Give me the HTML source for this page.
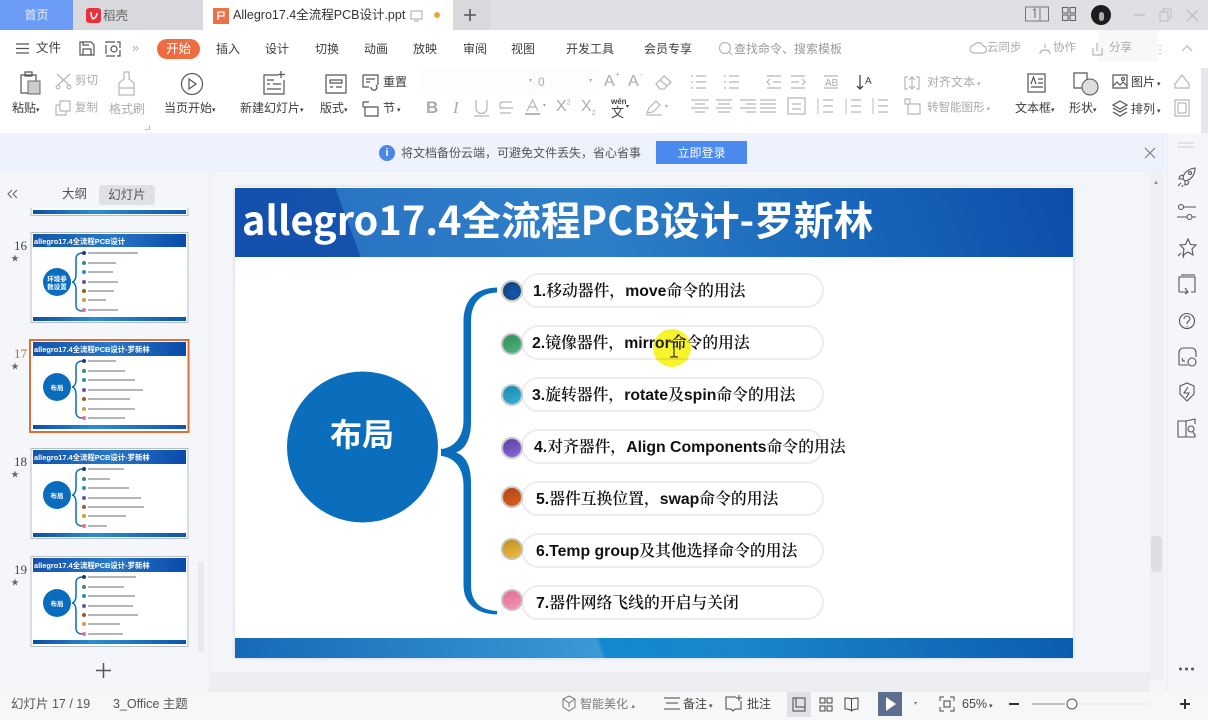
<!DOCTYPE html>
<html lang="zh">
<head>
<meta charset="utf-8">
<title>Allegro17.4全流程PCB设计.ppt</title>
<style>
html,body{margin:0;padding:0;width:1208px;height:720px;overflow:hidden;background:#f3f5f9}
body{position:relative;font-family:"Liberation Sans","Noto Sans CJK SC",sans-serif;color:#3d3d3d;font-size:13px;line-height:1.2}
.a{position:absolute;white-space:nowrap}
.g{color:#a9abae}
.pill{position:absolute;left:521px;width:299px;height:31px;background:#fff;border:2px solid #ececef;border-radius:18px;box-sizing:content-box}
.dot{position:absolute;left:501px;width:22px;height:22px;border-radius:50%;box-shadow:0 0 0 1px #c8c8c4 inset}
.dot i{position:absolute;left:2px;top:2px;width:18px;height:18px;border-radius:50%}
.it{position:absolute;white-space:nowrap;font-family:"Liberation Sans","Noto Serif CJK SC",serif;font-size:15.8px;font-weight:600;color:#111;line-height:22px;letter-spacing:0}
.it b{font-family:"Liberation Sans",sans-serif;font-weight:700}
svg{position:absolute;overflow:visible}
.s{fill:none;stroke:#555;stroke-width:1.2}
.l{fill:none;stroke:#b4b6b9;stroke-width:1.2}
</style>
</head>
<body>
<!-- tab bar -->
<div class="a" style="left:0;top:0;width:1208px;height:30px;background:#dfe0e3"></div>
<div class="a" style="left:0;top:0;width:73px;height:30px;background:#6c9cf6;color:#e8f0ff;text-align:center;line-height:31px;font-size:12px">首页</div>
<div class="a" style="left:73px;top:0;width:130px;height:30px;background:#d8d9dc"></div>
<div class="a" style="left:86px;top:8px;width:15px;height:15px;background:#e8303f;border-radius:3px"></div>
<svg style="left:86px;top:8px" width="15" height="15"><path d="M5 4c0 4 1 6 2 7 2-1 4-3 4-6" fill="none" stroke="#fff" stroke-width="1.500"/></svg>
<div class="a" style="left:103px;top:9px;font-size:12.500px;color:#666">稻壳</div>
<div class="a" style="left:203px;top:0;width:250px;height:30px;background:#fff"></div>
<div class="a" style="left:213px;top:8px;width:16px;height:16px;background:#ee7048"></div>
<svg style="left:213px;top:8px" width="16" height="16"><path d="M5 12V4h6v4H5" fill="none" stroke="#fff" stroke-width="1.300"/></svg>
<div class="a" style="left:233px;top:8px;font-size:12.500px;color:#333">Allegro17.4全流程PCB设计.ppt</div>
<svg style="left:410px;top:10px" width="14" height="12"><rect x="1" y="1" width="11" height="8" class="l"/><path d="M4 11h5" class="l"/></svg>
<div class="a" style="left:434px;top:12px;width:6px;height:6px;border-radius:50%;background:#e8a93a"></div>
<div class="a" style="left:453px;top:0;width:37px;height:30px;background:#d8d9dc"></div>
<svg style="left:463px;top:8px" width="14" height="14"><path d="M7 1v12M1 7h12" stroke="#555" stroke-width="1.600" fill="none"/></svg>
<svg style="left:1025px;top:6px" width="24" height="16"><rect x=".5" y="1" width="23" height="14" fill="none" stroke="#777"/><path d="M15 1v14" stroke="#777"/><path d="M8 4l2-1v9" fill="none" stroke="#666"/></svg>
<svg style="left:1062px;top:7px" width="14" height="14"><g fill="none" stroke="#666" stroke-width="1.100"><rect x=".5" y=".5" width="5.500" height="5.500"/><rect x="8" y=".5" width="5.500" height="5.500"/><rect x=".5" y="8" width="5.500" height="5.500"/><rect x="8" y="8" width="5.500" height="5.500"/></g></svg>
<div class="a" style="left:1091px;top:5px;width:20px;height:20px;border-radius:50%;background:#1d1d1f"></div>
<div class="a" style="left:1099px;top:12px;width:5px;height:9px;background:#aaa;border-radius:3px"></div>
<svg style="left:1133px;top:8px" width="70" height="14"><path d="M1 7h11" stroke="#bbb" stroke-width="1.200"/><path d="M27 4h8v9h-8zM30 4V1h8v9h-3" fill="none" stroke="#bbb"/><path d="M54 2l11 11M65 2L54 13" stroke="#bbb" stroke-width="1.200"/></svg>

<!-- menu row + ribbon -->
<div class="a" style="left:0;top:30px;width:1208px;height:103px;background:#fff"></div>
<svg style="left:16px;top:43px" width="14" height="11"><path d="M0 1h13M0 5.500h13M0 10h13" stroke="#555" stroke-width="1.200"/></svg>
<div class="a" style="left:36px;top:41px;font-size:12.500px">文件</div>
<svg style="left:79px;top:41px" width="16" height="15"><path d="M1 1h11l3 3v10H1zM4 14V8h8v6M4 1v3h6" class="s"/></svg>
<svg style="left:105px;top:41px" width="16" height="16"><rect x="1" y="1" width="14" height="14" class="s" stroke-dasharray="9 2"/><circle cx="9" cy="8" r="3" class="s"/></svg>
<div class="a" style="left:132px;top:40px;font-size:13px;color:#aaa">»</div>
<div class="a" style="left:157px;top:39px;width:43px;height:20px;border-radius:10px;background:#ef6c42;color:#fff;text-align:center;line-height:20px;font-size:12.500px">开始</div>
<div class="a" style="left:216px;top:42px;font-size:12px">插入</div>
<div class="a" style="left:265px;top:42px;font-size:12px">设计</div>
<div class="a" style="left:315px;top:42px;font-size:12px">切换</div>
<div class="a" style="left:364px;top:42px;font-size:12px">动画</div>
<div class="a" style="left:413px;top:42px;font-size:12px">放映</div>
<div class="a" style="left:463px;top:42px;font-size:12px">审阅</div>
<div class="a" style="left:511px;top:42px;font-size:12px">视图</div>
<div class="a" style="left:566px;top:42px;font-size:12px">开发工具</div>
<div class="a" style="left:644px;top:42px;font-size:12px">会员专享</div>
<svg style="left:718px;top:41px" width="16" height="16"><circle cx="7" cy="7" r="5.500" class="l"/><path d="M11 11l3 3" class="l"/></svg>
<div class="a g" style="left:734px;top:42px;font-size:12px;color:#999">查找命令、搜索模板</div>
<div class="a" style="left:1098px;top:30px;width:60px;height:32px;background:#f4f4f4;opacity:.6"></div>
<div class="a g" style="left:987px;top:42px;font-size:11.500px">云同步</div>
<div class="a g" style="left:1053px;top:42px;font-size:11.500px">协作</div>
<div class="a g" style="left:1109px;top:42px;font-size:11.500px">分享</div>
<svg style="left:960px;top:42px" width="230" height="14"><path d="M14 11a4 4 0 010-8 5 5 0 019 1 3 3 0 010 7z" class="l"/><path d="M80 12c0-3 2-4 5-4s5 1 5 4M85 2v4" class="l"/><path d="M133 6v7h9V6M137 1v8" class="l"/><path d="M200 3v1M200 7v1M200 11v1" stroke="#888"/><path d="M222 9l5-5 5 5" class="l"/></svg>

<!-- ribbon icons -->
<svg style="left:18px;top:71px" width="24" height="24"><path d="M3 4h15v18H3zM7 1h7v4H7z" class="s"/><rect x="10" y="10" width="12" height="13" fill="#ccc" stroke="#666"/></svg>
<div class="a" style="left:12px;top:101px;font-size:12px">粘贴<span style="font-size:7px">▾</span></div>
<svg style="left:55px;top:73px" width="18" height="16"><path d="M2 1l12 11M15 1L3 12" class="l"/><circle cx="3" cy="14" r="1.800" class="l"/><circle cx="14" cy="14" r="1.800" class="l"/></svg>
<div class="a g" style="left:75px;top:75px;font-size:11.500px">剪切</div>
<svg style="left:55px;top:100px" width="16" height="16"><path d="M5 1h10v10H5zM1 5h4M1 5v10h10v-4" class="l"/></svg>
<div class="a g" style="left:75px;top:102px;font-size:11.500px">复制</div>
<svg style="left:117px;top:71px" width="20" height="25"><path d="M7 1h5v7l5 4v12H2V12l5-4z" class="l"/><path d="M2 17h15" class="l"/></svg>
<div class="a g" style="left:109px;top:102px;font-size:12px">格式刷</div>
<svg style="left:180px;top:72px" width="24" height="24"><circle cx="12" cy="12" r="10.500" class="s"/><path d="M9 7l7 5-7 5z" class="s"/></svg>
<div class="a" style="left:164px;top:101px;font-size:12px">当页开始<span style="font-size:7px">▾</span></div>
<svg style="left:262px;top:71px" width="25" height="25"><path d="M16 4H2v19h20V9M5 9h7M5 13h3M5 18h14M11 13h8M19 0v7M16 3.500h7" class="s"/></svg>
<div class="a" style="left:240px;top:101px;font-size:12px">新建幻灯片<span style="font-size:7px">▾</span></div>
<svg style="left:325px;top:74px" width="22" height="20"><path d="M1 1h20v18H1zM5 6h12v3H5zM5 13h3M11 13h6" class="s"/></svg>
<div class="a" style="left:320px;top:101px;font-size:12px">版式<span style="font-size:7px">▾</span></div>
<svg style="left:362px;top:74px" width="17" height="16"><path d="M1 1h15v10M1 1v12h6M4 5h9M4 8h4" class="s"/><path d="M9 13a3 3 0 105-2" class="s"/></svg>
<div class="a" style="left:383px;top:75px;font-size:12px">重置</div>
<svg style="left:362px;top:100px" width="17" height="17"><path d="M1 2v5M1 7h15v9H3V7M1 2h6" class="s"/></svg>
<div class="a" style="left:383px;top:101px;font-size:12px">节<span style="font-size:7px"> ▾</span></div>
<div class="a" style="left:145px;top:125px;width:4px;height:4px;border-right:1px solid #bbb;border-bottom:1px solid #bbb"></div>

<!-- font controls -->
<div class="a" style="left:421px;top:71px;width:114px;height:22px;background:#fdfdfd;box-shadow:0 0 2px #eee"></div>
<div class="a" style="left:535px;top:71px;width:63px;height:22px;background:#fdfdfd;box-shadow:0 0 2px #eee"></div>
<div class="a g" style="left:529px;top:78px;font-size:6px">▾</div>
<div class="a g" style="left:538px;top:75px;font-size:12px">0</div>
<div class="a g" style="left:589px;top:78px;font-size:6px">▾</div>
<div class="a g" style="left:604px;top:72px;font-size:16px">A</div>
<div class="a g" style="left:615px;top:70px;font-size:8px">+</div>
<div class="a g" style="left:628px;top:72px;font-size:16px">A</div>
<div class="a g" style="left:640px;top:70px;font-size:8px">-</div>
<svg style="left:655px;top:74px" width="18" height="16"><path d="M1 10l8-8 7 6-7 7H5zM5 6l7 6" class="l"/></svg>
<div class="a g" style="left:426px;top:98px;font-size:17px;font-weight:700">B</div>
<div class="a g" style="left:453px;top:98px;font-size:17px;font-style:italic;font-family:'Liberation Serif',serif">I</div>
<svg style="left:474px;top:100px" width="15" height="17"><path d="M2 0v8a5.500 5.500 0 0011 0V0M0 16h15" class="l"/></svg>
<svg style="left:499px;top:101px" width="15" height="14"><path d="M13 1H3Q1 1 1 4t2 3h10M1 7h13M1 12h11" class="l"/></svg>
<svg style="left:525px;top:99px" width="15" height="18"><path d="M2 12L7.500 1 13 12M4 8h7" class="l"/><path d="M0 15h15" stroke="#b4b6b9" stroke-width="2"/></svg>
<div class="a g" style="left:543px;top:103px;font-size:6px">▾</div>
<div class="a g" style="left:556px;top:97px;font-size:16px">X<sup style="font-size:7px">2</sup></div>
<div class="a g" style="left:581px;top:97px;font-size:16px">X<sub style="font-size:7px">2</sub></div>
<div class="a" style="left:611px;top:97px;font-size:8px;color:#444;font-weight:700">wén</div>
<div class="a" style="left:611px;top:105px;font-size:13px;color:#444">文</div>
<div class="a" style="left:626px;top:104px;font-size:6px">▾</div>
<svg style="left:645px;top:100px" width="18" height="16"><path d="M2 13l2-5 7-7 4 4-7 7zM1 15h16" class="l"/></svg>
<div class="a g" style="left:665px;top:104px;font-size:6px">▾</div>
<!-- para icons -->
<svg style="left:690px;top:74px" width="290" height="44">
<g class="l">
<path d="M1 2h2M1 8h2M1 14h2M6 2h10M6 8h10M6 14h10"/>
<path d="M34 2h2M34 8h2M34 14h2M39 2h10M39 8h10M39 14h10"/>
<path d="M77 2h14M83 8h8M77 14h14M80 5l-3 3 3 3"/>
<path d="M101 2h14M101 8h8M101 14h14M112 5l3 3-3 3"/>
<path d="M1 26h18M5 30h10M1 34h18M5 38h10"/>
<path d="M26 26h16M28 30h12M26 34h16M28 38h12"/>
<path d="M50 26h16M56 30h10M50 34h16M56 38h10"/>
<path d="M70 26h16M70 30h16M70 34h16M70 38h16"/>
<path d="M98 24h17v16H98zM102 30h9M102 35h9"/>
<path d="M133 26h10M133 32h10M133 38h10"/>
<path d="M161 26h10M161 32h10M161 38h10"/>
<path d="M188 26h10M188 32h10M188 38h10"/>
<path d="M215 25h5v5h-5zM218 30h12v10h-12z"/>
</g>
<path d="M128 24v16M156 24v16M183 24v16" stroke="#bbb" fill="none"/>
<text x="135" y="12" font-size="10" fill="#aaa" font-family="Liberation Sans">AB</text>
<path d="M134 2h14M134 14h14" class="l"/>
<path d="M170 1v14M167 12l3 3 3-3" stroke="#444" fill="none" stroke-width="1.300"/>
<text x="175" y="10" font-size="10" fill="#444" font-family="Liberation Sans">A</text>
<path d="M218 3h-3v12h3M226 3h3v12h-3M222 3v12M219 6l3-3 3 3M219 12l3 3 3-3" class="l"/>
</svg>
<div class="a g" style="left:927px;top:75px;font-size:12px">对齐文本<span style="font-size:7px"> ▾</span></div>
<div class="a g" style="left:927px;top:102px;font-size:11.500px">转智能图形<span style="font-size:7px"> ▾</span></div>
<svg style="left:1026px;top:72px" width="21" height="22"><rect x="2" y="2" width="17" height="18" class="s"/><path d="M5 12l2.500-7 2.500 7M12 7h5M12 11h5M5 15h12" class="s"/></svg>
<div class="a" style="left:1015px;top:101px;font-size:12px">文本框<span style="font-size:7px">▾</span></div>
<svg style="left:1073px;top:72px" width="26" height="24"><path d="M1 1h13v15H1z" class="s" fill="#fff"/><circle cx="17" cy="15" r="8" fill="#ddd" stroke="#555"/></svg>
<div class="a" style="left:1069px;top:101px;font-size:12px">形状<span style="font-size:7px">▾</span></div>
<svg style="left:1112px;top:74px" width="16" height="15"><path d="M1 1h14v13H1zM1 12l4-4 3 3 3-3 4 4" class="s"/><circle cx="11" cy="5" r="1.500" class="s"/></svg>
<div class="a" style="left:1131px;top:75px;font-size:12px">图片<span style="font-size:7px"> ▾</span></div>
<svg style="left:1112px;top:100px" width="16" height="17"><path d="M8 1l7 4-7 4-7-4zM1 8l7 4 7-4M1 12l7 4 7-4" class="s"/></svg>
<div class="a" style="left:1131px;top:102px;font-size:12px">排列<span style="font-size:7px"> ▾</span></div>
<svg style="left:1173px;top:73px" width="18" height="46"><path d="M2 11l7-9 7 9v4H2z" class="l"/><path d="M2 27h14v16H2zM5 30h8v10H5z" class="l"/></svg>
<div class="a" style="left:1201px;top:68px;width:7px;height:65px;background:#e6e7ea"></div>

<!-- notification bar -->
<div class="a" style="left:0;top:133px;width:1208px;height:39px;background:#edf2fc"></div>
<div class="a" style="left:379px;top:145px;width:16px;height:16px;border-radius:50%;background:#4a86e8;color:#fff;text-align:center;font-size:11px;line-height:16px;font-weight:700">i</div>
<div class="a" style="left:401px;top:146px;font-size:12px;color:#555">将文档备份云端，可避免文件丢失，省心省事</div>
<div class="a" style="left:656px;top:141px;width:91px;height:23px;background:#4a89ee;color:#fff;text-align:center;line-height:24px;font-size:12px">立即登录</div>
<svg style="left:1144px;top:147px" width="12" height="12"><path d="M1 1l10 10M11 1L1 11" stroke="#777" stroke-width="1.100"/></svg>

<!-- left panel -->
<div class="a" style="left:0;top:172px;width:209px;height:520px;background:#f4f6fa;border-right:1px solid #e8eaee"></div>
<svg style="left:7px;top:189px" width="12" height="10"><path d="M5 1L1 5l4 4M10 1L6 5l4 4" fill="none" stroke="#666" stroke-width="1.100"/></svg>
<div class="a" style="left:62px;top:187px;font-size:12.500px;color:#555">大纲</div>
<div class="a" style="left:99px;top:185px;width:56px;height:20px;background:#dfe1e5;border-radius:3px;text-align:center;line-height:20px;font-size:12.500px;color:#555">幻灯片</div>

<svg style="left:0;top:205px;width:209px;height:450px" width="209" height="450" viewBox="0 205 209 450" font-family="Liberation Sans,Noto Sans CJK SC,sans-serif">
<defs>
<linearGradient id="h" x1="0" x2="1"><stop offset="0" stop-color="#1452ad"/><stop offset=".5" stop-color="#2878c8"/><stop offset="1" stop-color="#0a4aaa"/></linearGradient>
<linearGradient id="f" x1="0" x2="1"><stop offset="0" stop-color="#0b4da8"/><stop offset=".4" stop-color="#2b8ed0"/><stop offset="1" stop-color="#0b56ac"/></linearGradient>
</defs>
<!-- partial top thumb -->
<path d="M31 208v7.500h157V208" fill="#fff" stroke="#b6bdc8"/>
<rect x="33" y="210" width="153" height="4" fill="url(#f)"/>
<!-- 16 -->
<g>
<rect x="31" y="232.500" width="157" height="90" fill="#fff" stroke="#b6bdc8"/>
<rect x="33" y="234" width="153" height="13" fill="url(#h)"/>
<text x="34" y="244" font-size="7.400" font-weight="700" fill="#fff">allegro17.4全流程PCB设计</text>
<rect x="33" y="317" width="153" height="4" fill="url(#f)"/>
<circle cx="57" cy="282" r="14" fill="#0a6cbc"/>
<text x="57" y="281" font-size="6.500" font-weight="700" fill="#fff" text-anchor="middle">环境参</text>
<text x="57" y="289" font-size="6.500" font-weight="700" fill="#fff" text-anchor="middle">数设置</text>
<path d="M83 253c-5 0-7 2-7 6v16c0 4-2 7-4 7 2 0 4 3 4 7v16c0 4 2 6 7 6" fill="none" stroke="#0a6cbc" stroke-width="1.500"/>
<circle cx="84" cy="253" r="2" fill="#1b3c70"/><circle cx="84" cy="263" r="2" fill="#3f8f6a"/><circle cx="84" cy="272" r="2" fill="#2b90b8"/><circle cx="84" cy="282" r="2" fill="#6d52b5"/><circle cx="84" cy="291" r="2" fill="#a8552a"/><circle cx="84" cy="300" r="2" fill="#c8a23a"/><circle cx="84" cy="310" r="2" fill="#d6779a"/>
<path d="M88 253h50M88 263h28M88 272h25M88 282h30M88 291h26M88 300h18M88 310h30" stroke="#9a9da0" stroke-width="1.500"/>
</g>
<!-- 17 -->
<g>
<rect x="30" y="340" width="158.500" height="92" fill="#fff" stroke="#dd6f38" stroke-width="2"/>
<rect x="33" y="342" width="153" height="14" fill="url(#h)"/>
<text x="34" y="352" font-size="7.400" font-weight="700" fill="#fff">allegro17.4全流程PCB设计-罗新林</text>
<rect x="33" y="425" width="153" height="4" fill="url(#f)"/>
<circle cx="57" cy="387" r="14" fill="#0a6cbc"/>
<text x="57" y="390" font-size="6.500" font-weight="700" fill="#fff" text-anchor="middle">布局</text>
<path d="M83 361c-5 0-7 2-7 6v13c0 4-2 7-4 7 2 0 4 3 4 7v18c0 4 2 6 7 6" fill="none" stroke="#0a6cbc" stroke-width="1.500"/>
<circle cx="84" cy="361" r="2" fill="#1b3c70"/><circle cx="84" cy="371" r="2" fill="#3f8f6a"/><circle cx="84" cy="380" r="2" fill="#2b90b8"/><circle cx="84" cy="390" r="2" fill="#6d52b5"/><circle cx="84" cy="399" r="2" fill="#a8552a"/><circle cx="84" cy="409" r="2" fill="#c8a23a"/><circle cx="84" cy="418" r="2" fill="#d6779a"/>
<path d="M88 361h28M88 371h37M88 380h47M88 390h55M88 399h42M88 409h47M88 418h37" stroke="#9a9da0" stroke-width="1.500"/>
</g>
<!-- 18 -->
<g>
<rect x="31" y="448.500" width="157" height="90" fill="#fff" stroke="#b6bdc8"/>
<rect x="33" y="450" width="153" height="14" fill="url(#h)"/>
<text x="34" y="460" font-size="7.400" font-weight="700" fill="#fff">allegro17.4全流程PCB设计-罗新林</text>
<rect x="33" y="533" width="153" height="4" fill="url(#f)"/>
<circle cx="57" cy="495" r="14" fill="#0a6cbc"/>
<text x="57" y="498" font-size="6.500" font-weight="700" fill="#fff" text-anchor="middle">布局</text>
<path d="M83 469c-5 0-7 2-7 6v13c0 4-2 7-4 7 2 0 4 3 4 7v18c0 4 2 6 7 6" fill="none" stroke="#0a6cbc" stroke-width="1.500"/>
<circle cx="84" cy="469" r="2" fill="#1b3c70"/><circle cx="84" cy="479" r="2" fill="#3f8f6a"/><circle cx="84" cy="488" r="2" fill="#2b90b8"/><circle cx="84" cy="498" r="2" fill="#6d52b5"/><circle cx="84" cy="507" r="2" fill="#a8552a"/><circle cx="84" cy="516" r="2" fill="#c8a23a"/><circle cx="84" cy="526" r="2" fill="#d6779a"/>
<path d="M88 469h36M88 479h22M88 488h41M88 498h53M88 507h56M88 516h38M88 526h19" stroke="#9a9da0" stroke-width="1.500"/>
</g>
<!-- 19 -->
<g>
<rect x="31" y="556.500" width="157" height="90" fill="#fff" stroke="#b6bdc8"/>
<rect x="33" y="558" width="153" height="14" fill="url(#h)"/>
<text x="34" y="568" font-size="7.400" font-weight="700" fill="#fff">allegro17.4全流程PCB设计-罗新林</text>
<rect x="33" y="640" width="153" height="4" fill="url(#f)"/>
<circle cx="57" cy="603" r="14" fill="#0a6cbc"/>
<text x="57" y="606" font-size="6.500" font-weight="700" fill="#fff" text-anchor="middle">布局</text>
<path d="M83 577c-5 0-7 2-7 6v13c0 4-2 7-4 7 2 0 4 3 4 7v18c0 4 2 6 7 6" fill="none" stroke="#0a6cbc" stroke-width="1.500"/>
<circle cx="84" cy="577" r="2" fill="#1b3c70"/><circle cx="84" cy="587" r="2" fill="#3f8f6a"/><circle cx="84" cy="596" r="2" fill="#2b90b8"/><circle cx="84" cy="606" r="2" fill="#6d52b5"/><circle cx="84" cy="615" r="2" fill="#a8552a"/><circle cx="84" cy="624" r="2" fill="#c8a23a"/><circle cx="84" cy="634" r="2" fill="#d6779a"/>
<path d="M88 577h48M88 587h36M88 596h47M88 606h45M88 615h50M88 624h32M88 634h35" stroke="#9a9da0" stroke-width="1.500"/>
</g>
</svg>
<div class="a" style="left:14px;top:238px;font:13px 'Liberation Serif',serif;color:#444">16</div>
<div class="a" style="left:14px;top:346px;font:13px 'Liberation Serif',serif;color:#c8642c">17</div>
<div class="a" style="left:14px;top:454px;font:13px 'Liberation Serif',serif;color:#444">18</div>
<div class="a" style="left:14px;top:562px;font:13px 'Liberation Serif',serif;color:#444">19</div>
<div class="a" style="left:11px;top:254px;font-size:8px;color:#666">★</div>
<div class="a" style="left:11px;top:362px;font-size:8px;color:#666">★</div>
<div class="a" style="left:11px;top:470px;font-size:8px;color:#666">★</div>
<div class="a" style="left:11px;top:578px;font-size:8px;color:#666">★</div>
<div class="a" style="left:198px;top:561px;width:6px;height:92px;background:#e8eaee;border-radius:3px"></div>
<svg style="left:96px;top:663px" width="15" height="15"><path d="M7.500 0v15M0 7.500h15" stroke="#555" stroke-width="1.500"/></svg>

<!-- workspace -->
<div class="a" style="left:1150px;top:172px;width:14px;height:508px;background:#eef0f4"></div>
<div class="a" style="left:1151px;top:536px;width:11px;height:36px;background:#dcdee3;border-radius:4px"></div>
<div class="a" style="left:1153px;top:180px;font-size:6px;color:#888">▲</div>
<div class="a" style="left:209px;top:672px;width:941px;height:20px;background:#eceef2"></div>

<!-- slide -->
<div class="a" style="left:235px;top:187px;width:838px;height:471px;background:#fff;box-shadow:0 0 3px #c9ccd2"></div>
<div class="a" style="left:235px;top:188px;width:838px;height:69px;background:linear-gradient(70deg,#1350ae 0,#1452ae 14.5%,#2a74c4 14.6%,#2e7fc8 42%,#1a68bb 70%,#0c4dab 100%)"></div>
<div class="a" style="left:242px;top:193px;font:700 39.700px/52px 'Noto Sans CJK SC','Liberation Sans',sans-serif;color:#fff">allegro17.4全流程PCB设计-罗新林</div>
<div class="a" style="left:235px;top:638px;width:838px;height:20px;background:linear-gradient(70deg,#1669b8 0,#3a9ad4 43.5%,#1388d0 44%,#1a86cc 60%,#0c5cb0 100%)"></div>

<svg style="left:0;top:0" width="1208" height="720">
<circle cx="362.500" cy="447" r="75.500" fill="#0a6ebd"/>
<path d="M497 287.500C478 288 463.500 297 463.500 322V420C463.500 437 454 448 441 449V456C454 457 463.500 468 463.500 485V585C463.500 605 478 614 497 614.500V611C480 610 471 602 471 585V483C471 466 466 456 456 452.500C466 449 471 438 471 422V322C471 303 480 293 497 292.500Z" fill="#0a6ebd"/>
</svg>
<div class="a" style="left:330px;top:410px;font:700 32px/46px 'Noto Sans CJK SC',sans-serif;color:#fff">布局</div>

<div class="pill" style="top:273px"></div>
<div class="pill" style="top:325px"></div>
<div class="pill" style="top:377px"></div>
<div class="pill" style="top:429px"></div>
<div class="pill" style="top:481px"></div>
<div class="pill" style="top:533px"></div>
<div class="pill" style="top:585px"></div>

<div class="dot" style="top:280px;background:#d8d8a8"><i style="background:radial-gradient(circle at 60% 60%,#0e5aa8,#163a80)"></i></div>
<div class="dot" style="top:333px;background:#b8bcb8"><i style="background:linear-gradient(160deg,#2f8f58,#4fb57c)"></i></div>
<div class="dot" style="top:384px;background:#c0d0d8"><i style="background:linear-gradient(160deg,#1b88b0,#35b0d2)"></i></div>
<div class="dot" style="top:437px;background:#d0c8e0"><i style="background:linear-gradient(160deg,#5a3ea8,#8a68d2)"></i></div>
<div class="dot" style="top:486px;background:#d8c4bc"><i style="background:linear-gradient(160deg,#b04416,#d8601e)"></i></div>
<div class="dot" style="top:538px;background:#c8bca0"><i style="background:linear-gradient(160deg,#c08c20,#f0c040)"></i></div>
<div class="dot" style="top:589px;background:#d8bcc4"><i style="background:linear-gradient(160deg,#e06c92,#f595b5)"></i></div>

<div class="it" style="left:533px;top:281px"><b>1.</b>移动器件，<b>move</b>命令的用法</div>
<div class="it" style="left:532px;top:333px"><b>2.</b>镜像器件，<b>mirr<span style="color:#1a237e">or</span></b>命令的用法</div>
<div class="it" style="left:532px;top:385px"><b>3.</b>旋转器件，<b>rotate</b>及<b>spin</b>命令的用法</div>
<div class="it" style="left:534px;top:437px"><b>4.</b>对齐器件，<b>Align Components</b>命令的用法</div>
<div class="it" style="left:536px;top:489px"><b>5.</b>器件互换位置，<b>swap</b>命令的用法</div>
<div class="it" style="left:536px;top:541px"><b>6.Temp group</b>及其他选择命令的用法</div>
<div class="it" style="left:536px;top:593px"><b>7.</b>器件网络飞线的开启与关闭</div>

<!-- cursor highlight -->
<div class="a" style="left:653px;top:329px;width:38px;height:38px;border-radius:50%;background:rgba(248,240,0,.82);mix-blend-mode:multiply"></div>
<svg style="left:668px;top:341px" width="12" height="18"><path d="M2 1h3l1 1 1-1h3M6 2v13M2 16h3l1-1 1 1h3" fill="none" stroke="#333" stroke-width="1.200"/></svg>

<!-- right rail -->
<div class="a" style="left:1167px;top:133px;width:41px;height:559px;background:#f5f6f9;border-left:1px solid #eceef2"></div>
<svg style="left:1176px;top:140px" width="22" height="310" fill="none" stroke="#555" stroke-width="1.100">
<path d="M2 3h16M2 7h16" stroke="#ccc"/>
<g transform="translate(0,26)"><path d="M7 13C7 7 12 3 19 2 19 9 15 14 9 15ZM7 9l-3 1-1 3h4M13 15l-1 3-3 1v-4"/><circle cx="14" cy="7" r="1.500"/><path d="M2 20l3-3M6 21l1-2"/></g>
<g transform="translate(0,61)"><path d="M8 6h12M1 16h10M16 16h4"/><circle cx="5" cy="6" r="2.500"/><circle cx="13.500" cy="16" r="2.500"/></g>
<g transform="translate(0,97)"><path d="M12 2l2.500 5.500 5.500.5-4 4 1 6-5-3-5 3 1-6-4-4 5.500-.5z"/><path d="M2 19l3-3M7 21l1-3"/></g>
<g transform="translate(0,134)"><path d="M3 18V3h16v15h-4M3 18h8M9 14l3 4-3 2"/><path d="M5 1h14"/></g>
<g transform="translate(0,170)"><circle cx="11" cy="11" r="7.500"/><path d="M8 9c0-4 6-4 6 0 0 2-3 2-3 5M11 16v1"/></g>
<g transform="translate(0,206)"><path d="M3 19V7c0-3 2-5 4-5h9c2 0 4 2 4 5v4M3 19h9M6 12l1 3M6 15h3"/><circle cx="16" cy="16" r="4"/></g>
<g transform="translate(0,241)"><path d="M11 2l7 3v8l-7 7-7-7V5z"/><path d="M12 6l-4 6h5l-3 5"/></g>
<g transform="translate(0,277)"><path d="M2 4h8v16H2zM10 4l9-2v5M10 20h9v-3"/><circle cx="15" cy="12" r="3"/><path d="M17 15l2 3"/></g>
</svg>
<svg style="left:1178px;top:666px" width="18" height="6"><circle cx="2.500" cy="3" r="1.500" fill="#555"/><circle cx="8.500" cy="3" r="1.500" fill="#555"/><circle cx="14.500" cy="3" r="1.500" fill="#555"/></svg>

<!-- status bar -->
<div class="a" style="left:0;top:692px;width:1208px;height:28px;background:#f6f7f9"></div>
<div class="a" style="left:11px;top:697px;font-size:12.500px;color:#555">幻灯片 17 / 19</div>
<div class="a" style="left:113px;top:697px;font-size:12.500px;color:#555">3_Office 主题</div>
<svg style="left:561px;top:695px" width="16" height="17"><path d="M8 1l6 3v8l-6 4-6-4V4zM2 4l6 4 6-4M8 8v4" fill="none" stroke="#777"/></svg>
<div class="a" style="left:580px;top:697px;font-size:12px;color:#777">智能美化 <span style="font-size:7px">▴</span></div>
<svg style="left:664px;top:696px" width="17" height="15"><path d="M0 2h16M2 7h12M0 13h16" fill="none" stroke="#444"/></svg>
<div class="a" style="left:683px;top:697px;font-size:12px;color:#444">备注<span style="font-size:7px"> ▾</span></div>
<svg style="left:725px;top:695px" width="17" height="17"><path d="M11 2H1v12h5l2 2 2-2h6V6M14 0v6M11 3h6" fill="none" stroke="#444"/></svg>
<div class="a" style="left:747px;top:697px;font-size:12px;color:#444">批注</div>
<div class="a" style="left:787px;top:692px;width:24px;height:25px;background:#dfe1e5"></div>
<svg style="left:792px;top:697px" width="14" height="15"><path d="M1 1h12v13H1zM4 1v9h9" fill="none" stroke="#444"/></svg>
<svg style="left:819px;top:697px" width="14" height="15"><g fill="none" stroke="#444"><rect x="1" y="1" width="5" height="5"/><rect x="8" y="1" width="5" height="5"/><rect x="1" y="9" width="5" height="5"/><rect x="8" y="9" width="5" height="5"/></g></svg>
<svg style="left:844px;top:697px" width="15" height="15"><path d="M7.500 2C6 1 3 1 1 1v11c2 0 5 0 6.500 2C9 12 12 12 14 12V1c-2 0-5 0-6.500 1zM7.500 2v12" fill="none" stroke="#444"/></svg>
<div class="a" style="left:878px;top:692px;width:24px;height:24px;background:#5d6f8f"></div>
<svg style="left:885px;top:697px" width="11" height="14"><path d="M1 0l10 7-10 7z" fill="#fff"/></svg>
<div class="a" style="left:914px;top:701px;font-size:6px;color:#777">▾</div>
<svg style="left:939px;top:696px" width="16" height="16"><path d="M1 5V1h4M11 1h4v4M15 11v4h-4M5 15H1v-4M5 5h6v6H5z" fill="none" stroke="#444"/></svg>
<div class="a" style="left:962px;top:697px;font-size:12.500px;color:#444">65%<span style="font-size:7px"> ▾</span></div>
<svg style="left:1008px;top:698px" width="185" height="12"><path d="M1 6h10" stroke="#333" stroke-width="2"/><path d="M24 6h33" stroke="#888"/><path d="M70 6h72" stroke="#e4e5e8"/><circle cx="64" cy="6" r="5" fill="#fff" stroke="#555"/><path d="M177 1v10M172 6h10" stroke="#333" stroke-width="2"/></svg>
</body>
</html>
